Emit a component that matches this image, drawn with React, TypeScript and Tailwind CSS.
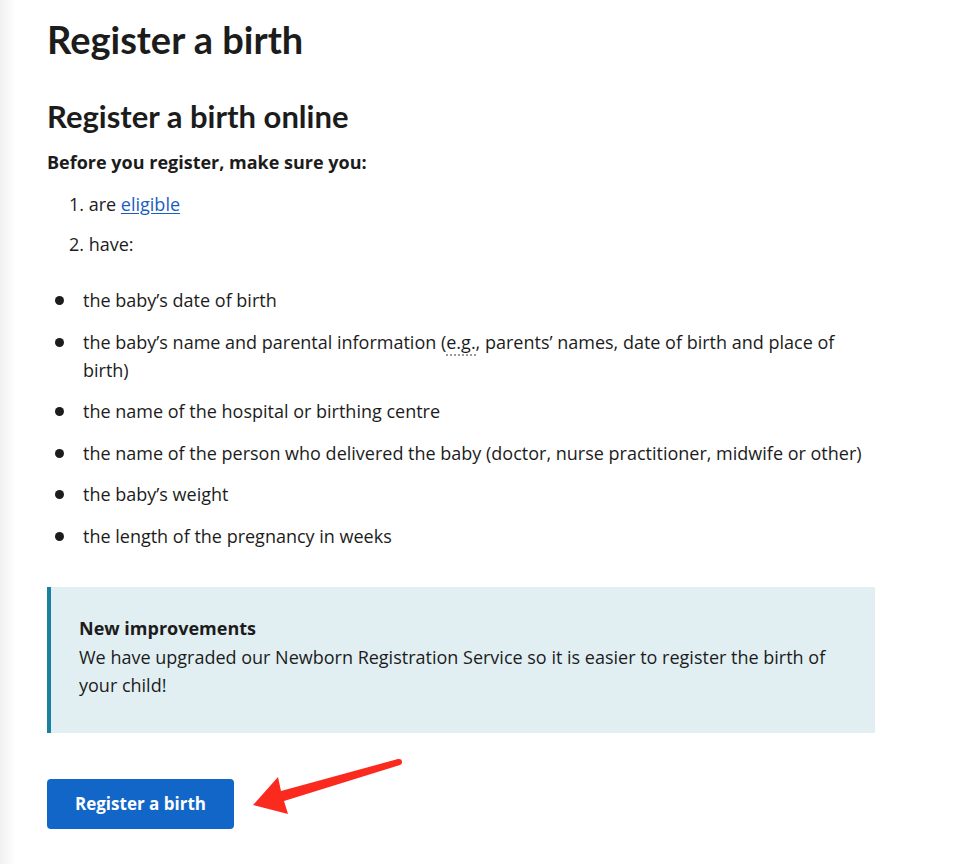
export default function App() {
  const items = [
    "the baby\u2019s date of birth",
    null,
    "the name of the hospital or birthing centre",
    "the name of the person who delivered the baby (doctor, nurse practitioner, midwife or other)",
    "the baby\u2019s weight",
    "the length of the pregnancy in weeks",
  ];

  return (
    <div className="min-h-screen flex bg-white text-[#1c1c1c] font-['Open_Sans',sans-serif]">
      {/* side shadow */}
      <div className="w-4 shrink-0 bg-gradient-to-r from-[#f1f1f1] to-white" />

      <main className="pl-[31px] w-[859px]">
        <h1 className="mt-[17px] text-[38px] leading-[44px] font-bold font-['Lato',sans-serif]">
          Register a birth
        </h1>

        <h2 className="mt-[37px] text-[31px] leading-[36px] font-bold font-['Lato',sans-serif]">
          Register a birth online
        </h2>

        <p className="mt-[14px] text-[18px] leading-[28px] font-bold">
          Before you register, make sure you:
        </p>

        <ol className="mt-[14px] ml-[22px] text-[18px] leading-[28px] space-y-[12px]">
          <li>
            1. are{" "}
            <a href="#" className="text-[#1a5dc2] underline underline-offset-2">
              eligible
            </a>
          </li>
          <li>2. have:</li>
        </ol>

        <ul className="mt-[28px] text-[18px] leading-[28px] space-y-[13.5px]">
          {items.map((text, i) => (
            <li key={i} className="flex">
              <span className="w-[36px] shrink-0 flex pt-[10px] pl-[8px]">
                <span className="w-[9px] h-[9px] rounded-full bg-[#1c1c1c]" />
              </span>
              <span className="pr-[10px]">
                {text ?? (
                  <>
                    the baby’s name and parental information (
                    <abbr className="no-underline border-b-2 border-dotted border-[#9a9a9a]" title="for example">
                      e.g.
                    </abbr>
                    , parents’ names, date of birth and place of birth)
                  </>
                )}
              </span>
            </li>
          ))}
        </ul>

        {/* callout */}
        <div className="mt-[37px] w-[828px] bg-[#e1eff3] border-l-4 border-[#1a7fa0] pl-[28px] pr-[44px] pt-[27px] pb-[34px] text-[18px] leading-[28px]">
          <p className="font-bold leading-[29px]">New improvements</p>
          <p>
            We have upgraded our Newborn Registration Service so it is easier to register the birth of
            your child!
          </p>
        </div>

        <div className="relative mt-[46px]">
          <button className="h-[50px] w-[187px] rounded bg-[#1166c8] text-white text-[17px] font-bold">
            Register a birth
          </button>
          <svg
            className="absolute left-[193px] top-[-29px]"
            width="170"
            height="70"
            viewBox="240 750 170 70"
          >
            <polygon
              fill="#fb2a1f"
              points="253,805 278,777 281,791 398,759 400,765 284,801 288,814"
            />
            <circle cx="399" cy="762" r="3" fill="#fb2a1f" />
          </svg>
        </div>
      </main>
    </div>
  );
}
